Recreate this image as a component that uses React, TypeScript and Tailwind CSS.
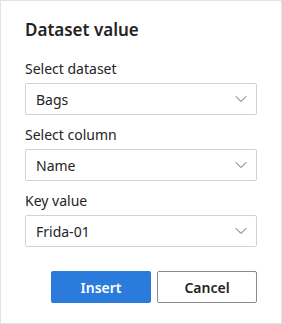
import React from "react";

const Chevron = () => (
  <svg width="12" height="8" viewBox="0 0 12 8" fill="none" className="shrink-0">
    <path d="M1 1.5 L6 6.5 L11 1.5" stroke="#616161" strokeWidth="1" strokeLinejoin="round" strokeLinecap="round" />
  </svg>
);

const Field = ({ label, value, first }: { label: string; value: string; first?: boolean }) => (
  <div className={first ? "flex flex-col" : "flex flex-col mt-[10px]"}>
    <div className="text-[14px] leading-[20px] text-[#242424] mb-[4px]">{label}</div>
    <div className="h-[32px] w-[232px] border border-[#d1d1d1] rounded-[2px] flex items-center justify-between pl-[10px] pr-[9px] bg-white">
      <span className="text-[14px] text-[#242424]">{value}</span>
      <Chevron />
    </div>
  </div>
);

export default function App() {
  return (
    <div
      className="w-[282px] h-[324px] bg-white border border-[#e3e3e3] flex flex-col pl-[24px] pt-[16px]"
      style={{ fontFamily: '"Segoe UI", "Noto Sans", sans-serif' }}
    >
      <div className="text-[17px] leading-[26px] font-semibold text-[#242424]">Dataset value</div>
      <div className="mt-[16px] flex flex-col">
        <Field label="Select dataset" value="Bags" first />
        <Field label="Select column" value="Name" />
        <Field label="Key value" value="Frida-01" />
      </div>
      <div className="mt-[24px] flex gap-[6px] pl-[26px]">
        <button className="w-[100px] h-[32px] rounded-[2px] bg-[#2b7bdc] text-white text-[14px] font-semibold">Insert</button>
        <button className="w-[100px] h-[32px] rounded-[2px] bg-white border border-[#8a8a8a] text-[#242424] text-[14px] font-semibold">Cancel</button>
      </div>
    </div>
  );
}
